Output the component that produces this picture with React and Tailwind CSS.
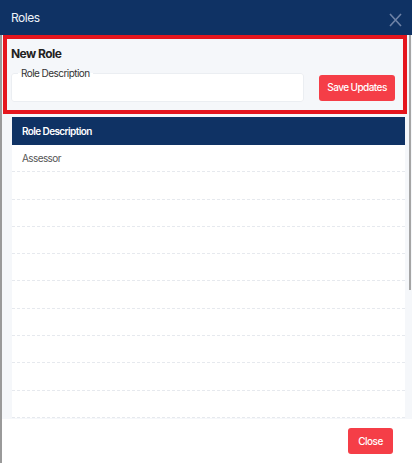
import React from "react";

const rows = ["Assessor", "", "", "", "", "", "", "", "", ""];

const App = () => {
  return (
    <div className="w-[412px] h-[463px] flex flex-col bg-white overflow-hidden relative font-['Inter',sans-serif]">
      <div className="h-[35px] shrink-0 bg-[#0f3264] flex items-center justify-between pl-[11px] pr-[10px]">
        <h2 className="text-[12px] tracking-[-0.45px] text-[#f0f3f8]">Roles</h2>
        <svg width="13" height="14" viewBox="0 0 13 14" className="mt-[4px]">
          <path d="M1 1 L12 13 M12 1 L1 13" stroke="#6e82a6" strokeWidth="1.6" fill="none" />
        </svg>
      </div>

      <div className="flex-1 flex flex-col border-l-[2px] border-[#9a9a9a] min-h-0">
        <div className="flex-1 bg-[#f5f7fa] pl-[1px] pr-[5px] min-h-0 overflow-hidden">
          <div className="border-[4px] border-[#e5161e] pl-[4px] pr-[8px] pt-[5px] pb-[8px]">
            <h3 className="text-[12px] font-bold tracking-[-0.55px] text-[#222] leading-[20px]">New Role</h3>
            <div className="flex items-center gap-[15px] mt-[9px]">
              <fieldset className="flex-1 h-[34px] -mt-[5px] border border-[#ebeef2] rounded-[3px] bg-white px-[6px]">
                <legend className="text-[10px] tracking-[-0.55px] text-[#333] px-[3px] leading-[11px]">Role Description</legend>
              </fieldset>
              <button className="h-[26px] w-[76px] bg-[#f53e47] text-white text-[10px] tracking-[-0.55px] font-medium rounded-[3px]">
                Save Updates
              </button>
            </div>
          </div>

          <div className="ml-[9px] mr-[2px] mt-[3px]">
            <div className="h-[28px] bg-[#0f3264] flex items-center pl-[10px]">
              <span className="text-[10px] tracking-[-0.6px] font-semibold text-white">Role Description</span>
            </div>
            {rows.map((r, i) => (
              <div key={i} className="h-[27.3px] bg-white border-b border-dashed border-[#e6e9ee] flex items-center pl-[10px]">
                <span className="text-[10px] tracking-[-0.6px] text-[#555]">{r}</span>
              </div>
            ))}
          </div>
        </div>

        <div className="h-[44px] shrink-0 bg-white flex items-center justify-end pr-[19px]">
          <button className="h-[26px] w-[45px] bg-[#f53e47] text-white text-[10px] tracking-[-0.5px] font-medium rounded-[3px]">
            Close
          </button>
        </div>
      </div>

      <div className="absolute right-[1px] top-[35px] w-[2px] h-[255px] bg-[#a5a5a5]" />
    </div>
  );
};

export default App;
